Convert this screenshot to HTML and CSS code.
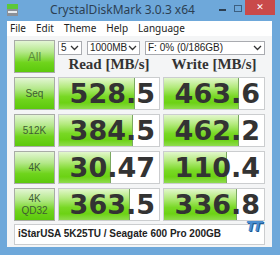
FILE: index.html
```html
<!DOCTYPE html>
<html lang="en">
<head>
    <title>CrystalDiskMark 3.0.3 x64</title>
    <link rel="stylesheet" href="styles.css">
</head>
<body>
    <div class="window">
        <div class="titlebar">
            <svg class="app-icon" width="11" height="12" viewBox="0 0 11 12">
                <rect x="0" y="0" width="11" height="5" fill="#5cc83a"/>
                <rect x="0" y="5" width="11" height="7" fill="#8a9098"/>
                <rect x="1" y="7" width="9" height="2" fill="#e8ecf0"/>
            </svg>
            <div class="title">CrystalDiskMark 3.0.3 x64</div>
            <div class="controls">
                <span class="ctl-min"></span>
                <span class="ctl-max"></span>
                <span class="ctl-close">&#x2715;</span>
            </div>
        </div>
        <div class="client">
            <div class="menu">
                <span>File</span>
                <span>Edit</span>
                <span>Theme</span>
                <span>Help</span>
                <span>Language</span>
            </div>
            <div class="main">
                <div class="label all">All</div>
                <div class="top-right">
                    <div class="selects">
                        <div class="select sel-count">5 <svg width="9" height="6" viewBox="0 0 9 6"><path d="M1 1 L4.5 4.5 L8 1" fill="none" stroke="#333" stroke-width="1.3"/></svg></div>
                        <div class="select sel-size">1000MB <svg width="9" height="6" viewBox="0 0 9 6"><path d="M1 1 L4.5 4.5 L8 1" fill="none" stroke="#333" stroke-width="1.3"/></svg></div>
                        <div class="select sel-drive">F: 0% (0/186GB) <svg width="9" height="6" viewBox="0 0 9 6"><path d="M1 1 L4.5 4.5 L8 1" fill="none" stroke="#333" stroke-width="1.3"/></svg></div>
                    </div>
                    <div class="heads">
                        <div>Read [MB/s]</div>
                        <div>Write [MB/s]</div>
                    </div>
                </div>

                <div class="label">Seq</div>
                <div class="cell"><span class="bar" style="width: 75px"></span><span class="num">528.5</span></div>
                <div class="cell"><span class="bar" style="width: 74px"></span><span class="num">463.6</span></div>

                <div class="label">512K</div>
                <div class="cell"><span class="bar" style="width: 73px"></span><span class="num">384.5</span></div>
                <div class="cell"><span class="bar" style="width: 74px"></span><span class="num">462.2</span></div>

                <div class="label">4K</div>
                <div class="cell"><span class="bar" style="width: 51px"></span><span class="num">30.47</span></div>
                <div class="cell"><span class="bar" style="width: 62px"></span><span class="num">110.4</span></div>

                <div class="label">4K<br>QD32</div>
                <div class="cell"><span class="bar" style="width: 70px"></span><span class="num">363.5</span></div>
                <div class="cell"><span class="bar" style="width: 72px"></span><span class="num">336.8</span></div>

                <div class="comment">iStarUSA 5K25TU / Seagate 600 Pro 200GB</div>
            </div>
            <span class="logo">TT</span>
        </div>
    </div>
</body>
</html>
```

FILE: styles.css
```css
body {
    margin: 0;
    background-color: #6ea8da;
    font-family: "DejaVu Sans", sans-serif;
}
.window {
    width: 280px;
    height: 255px;
    padding: 0 8px 8px 7px;
    box-sizing: border-box;
    display: flex;
    flex-direction: column;
}
.titlebar {
    height: 21px;
    display: flex;
    align-items: center;
    position: relative;
}
.app-icon {
    margin-top: -2px;
}
.title {
    flex: 1;
    text-align: center;
    font-family: "Noto Sans", sans-serif;
    font-size: 12px;
    color: #2c3f52;
    margin-left: 8px;
    margin-top: -2px;
}
.controls {
    display: flex;
    align-items: flex-start;
    align-self: flex-start;
    height: 15px;
    margin-right: -3px;
}
.ctl-min {
    width: 7px;
    height: 2px;
    background-color: #2c3f52;
    margin: 9px 8px 0 0;
}
.ctl-max {
    width: 6px;
    height: 5px;
    border: 1px solid #3d5f80;
    margin: 5px 3px 0 0;
}
.ctl-close {
    width: 30px;
    height: 15px;
    background-color: #c94a4a;
    color: #fff;
    font-size: 9px;
    font-weight: bold;
    text-align: center;
    line-height: 15px;
}
.client {
    flex: 1;
    background-color: #f4f5f6;
    display: flex;
    flex-direction: column;
    position: relative;
}
.menu {
    height: 15px;
    background-color: #fff;
    display: flex;
    gap: 10px;
    padding-left: 3px;
    font-family: "Noto Sans", sans-serif;
    font-size: 10px;
    line-height: 14px;
    color: #222;
}
.main {
    display: grid;
    grid-template-columns: 41px 102px 102px;
    grid-template-rows: 33px 33px 33px 33px 33px 20px;
    column-gap: 3px;
    row-gap: 4px;
    padding: 4px 0 0 7px;
}
.label {
    border: 1px solid #a8aca6;
    background: linear-gradient(to bottom, #e3f6d4 0%, #b4e88a 35%, #6fd41c 70%, #5cc90c 100%);
    display: flex;
    align-items: center;
    justify-content: center;
    text-align: center;
    font-family: "Liberation Sans", sans-serif;
    font-size: 10px;
    line-height: 12px;
    color: #3f5c33;
    box-sizing: border-box;
}
.all {
    font-size: 12px;
    color: #5b8a3c;
}
.top-right {
    grid-column: 2 / 4;
    display: flex;
    flex-direction: column;
}
.selects {
    display: flex;
    gap: 5px;
    margin-top: 1px;
}
.select {
    height: 14px;
    box-sizing: border-box;
    border: 1px solid #a9abb0;
    background-color: #fff;
    font-family: "Liberation Sans", sans-serif;
    font-size: 10px;
    line-height: 12px;
    color: #222;
    display: flex;
    align-items: center;
    justify-content: space-between;
    padding: 0 2px 0 2px;
}
.sel-count {
    width: 24px;
}
.sel-size {
    width: 53px;
}
.sel-drive {
    width: 120px;
}
.heads {
    display: grid;
    grid-template-columns: 102px 102px;
    column-gap: 3px;
    font-family: "Liberation Serif", serif;
    font-weight: bold;
    font-size: 15px;
    color: #333;
    text-align: center;
    line-height: 18px;
}
.cell {
    position: relative;
    border: 1px solid #cbcdcf;
    background-color: #fff;
    box-sizing: border-box;
    display: flex;
    align-items: center;
    justify-content: flex-end;
    padding-right: 4px;
}
.bar {
    position: absolute;
    left: 0;
    top: 0;
    bottom: 0;
    border-right: 1px solid #7aa860;
    background: linear-gradient(to bottom, #e2f7cc 0%, #b3ea7c 30%, #78d824 60%, #6cd214 80%, #8fdc4e 100%);
}
.num {
    position: relative;
    font-family: "DejaVu Sans", sans-serif;
    font-weight: bold;
    font-size: 27px;
    line-height: 28px;
    color: #333;
}
.comment {
    grid-column: 1 / 4;
    border: 1px solid #cbcdcf;
    background-color: #fff;
    font-family: "Liberation Sans", sans-serif;
    font-weight: bold;
    font-size: 10px;
    line-height: 18px;
    color: #222;
    padding-left: 3px;
    margin-top: -1px;
}
.logo {
    position: absolute;
    left: 239px;
    top: 199px;
    font-family: "DejaVu Sans", sans-serif;
    font-style: italic;
    font-weight: bold;
    font-size: 14px;
    line-height: 12px;
    letter-spacing: -3px;
    color: #4a8ed0;
    text-shadow: 1px 1px 0 #1f5c99;
}
```
